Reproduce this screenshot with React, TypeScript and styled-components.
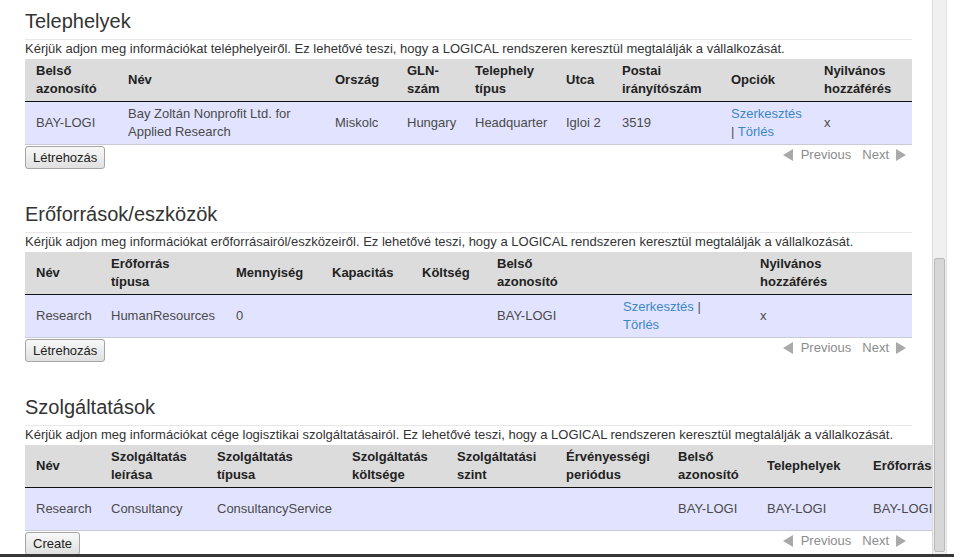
import React from 'react';
import styled, { createGlobalStyle } from 'styled-components';

const GlobalStyle = createGlobalStyle`
  html, body {
    margin: 0;
    padding: 0;
    background: #fff;
    overflow: hidden;
  }
  body {
    font-family: 'Liberation Sans', Arial, sans-serif;
    color: #333;
  }
`;

const Frame = styled.div`
  width: 954px;
  height: 557px;
  display: flex;
  flex-direction: column;
`;

const Viewport = styled.div`
  display: flex;
  flex: 1;
  min-height: 0;
`;

const Content = styled.main`
  flex: 1;
  min-width: 0;
  overflow: hidden;
  padding-left: 25px;
`;

const ScrollTrack = styled.div`
  display: flex;
  flex-direction: column;
  padding: 258px 1px 2px;
  box-sizing: border-box;
  width: 15px;
  background: #f0f0f0;
  border-left: 1px solid #dadada;
  border-right: 1px solid #e2e2e2;
`;

const ScrollThumb = styled.div`
  flex: 1;
  background: #d7d7d7;
  border: 1px solid #b9b9b9;
  border-radius: 2px;
`;

const RightGap = styled.div`
  width: 7px;
  background: #fff;
`;

const TaskBar = styled.div`
  height: 3px;
  background: #343638;
`;

const Section = styled.section`
  width: 887px;
  padding: 9px 0 24px;
`;

const Heading = styled.h2`
  margin: 0;
  font-size: 20px;
  font-weight: normal;
  line-height: 24px;
  padding-bottom: 6px;
  border-bottom: 1px solid #e8e8e8;
  color: #333;
`;

const Description = styled.p`
  margin: 0;
  font-size: 13px;
  line-height: 18px;
  padding-bottom: 1px;
  color: #333;
  white-space: nowrap;
`;

const Table = styled.table<{ $width: number }>`
  width: ${(p) => p.$width}px;
  border-collapse: collapse;
  table-layout: fixed;
`;

const HeadRow = styled.tr`
  height: 42px;
`;

const HeadCell = styled.th`
  background: #dcdcdc;
  text-align: left;
  font-weight: bold;
  font-size: 13px;
  line-height: 18px;
  padding: 3px 12px 3px 11px;
  border-bottom: 1px solid #111;
  color: #222;
  vertical-align: middle;
  white-space: normal;
`;

const BodyRow = styled.tr`
  height: 43px;
`;

const Cell = styled.td`
  background: #e2e4ff;
  padding: 3px 9px 3px 11px;
  font-size: 13px;
  line-height: 18px;
  color: #4a4a4a;
  border-bottom: 1px solid #c9cad4;
  vertical-align: middle;
  overflow: hidden;
  white-space: normal;
`;

const Link = styled.a`
  color: #3d86c6;
  text-decoration: none;
  cursor: pointer;
`;

const Sep = styled.span`
  color: #555;
`;

const Footer = styled.div`
  display: flex;
  justify-content: space-between;
  align-items: flex-start;
  margin-top: 1px;
`;

const Button = styled.button`
  height: 23px;
  padding: 0 7px;
  box-sizing: border-box;
  font-family: 'Liberation Sans', Arial, sans-serif;
  font-size: 13px;
  color: #222;
  border: 1px solid #a5a5a5;
  border-radius: 3px;
  background: linear-gradient(#f8f8f8, #e0e0e0);
`;

const Pager = styled.div`
  display: flex;
  align-items: center;
  padding-right: 6px;
  font-size: 13px;
  line-height: 18px;
  color: #8c8c8c;
`;

const PagerItem = styled.span<{ $gap: number }>`
  margin-left: ${(p) => p.$gap}px;
  display: flex;
  align-items: center;
`;

const Arrow = ({ dir }: { dir: 'left' | 'right' }) => (
  <svg width="10" height="12" viewBox="0 0 10 12">
    <polygon points={dir === 'left' ? '10,0 10,12 0,6' : '0,0 0,12 10,6'} fill="#a9a9a9" />
  </svg>
);

type CellValue = string | { actions: true };

type Column = {
  label: string[];
  width: number;
};

type SectionData = {
  title: string;
  description: string;
  columns: Column[];
  rows: CellValue[][];
  button: string;
};

const actions: CellValue = { actions: true };

const sections: SectionData[] = [
  {
    title: 'Telephelyek',
    description:
      'Kérjük adjon meg információkat teléphelyeiről. Ez lehetővé teszi, hogy a LOGICAL rendszeren keresztül megtalálják a vállalkozását.',
    columns: [
      { label: ['Belső', 'azonosító'], width: 92 },
      { label: ['Név'], width: 207 },
      { label: ['Ország'], width: 72 },
      { label: ['GLN-', 'szám'], width: 68 },
      { label: ['Telephely', 'típus'], width: 91 },
      { label: ['Utca'], width: 56 },
      { label: ['Postai', 'irányítószám'], width: 109 },
      { label: ['Opciók'], width: 93 },
      { label: ['Nyilvános', 'hozzáférés'], width: 99 },
    ],
    rows: [
      [
        'BAY-LOGI',
        'Bay Zoltán Nonprofit Ltd. for Applied Research',
        'Miskolc',
        'Hungary',
        'Headquarter',
        'Igloi 2',
        '3519',
        actions,
        'x',
      ],
    ],
    button: 'Létrehozás',
  },
  {
    title: 'Erőforrások/eszközök',
    description:
      'Kérjük adjon meg információkat erőforrásairól/eszközeiről. Ez lehetővé teszi, hogy a LOGICAL rendszeren keresztül megtalálják a vállalkozását.',
    columns: [
      { label: ['Név'], width: 75 },
      { label: ['Erőforrás', 'típusa'], width: 125 },
      { label: ['Mennyiség'], width: 96 },
      { label: ['Kapacitás'], width: 90 },
      { label: ['Költség'], width: 75 },
      { label: ['Belső', 'azonosító'], width: 126 },
      { label: [], width: 137 },
      { label: ['Nyilvános', 'hozzáférés'], width: 163 },
    ],
    rows: [['Research', 'HumanResources', '0', '', '', 'BAY-LOGI', actions, 'x']],
    button: 'Létrehozás',
  },
  {
    title: 'Szolgáltatások',
    description:
      'Kérjük adjon meg információkat cége logisztikai szolgáltatásairól. Ez lehetővé teszi, hogy a LOGICAL rendszeren keresztül megtalálják a vállalkozását.',
    columns: [
      { label: ['Név'], width: 75 },
      { label: ['Szolgáltatás', 'leírása'], width: 106 },
      { label: ['Szolgáltatás', 'típusa'], width: 135 },
      { label: ['Szolgáltatás', 'költsége'], width: 105 },
      { label: ['Szolgáltatási', 'szint'], width: 109 },
      { label: ['Érvényességi', 'periódus'], width: 112 },
      { label: ['Belső', 'azonosító'], width: 89 },
      { label: ['Telephelyek'], width: 106 },
      { label: ['Erőforrások'], width: 110 },
      { label: ['Opciók'], width: 100 },
      { label: ['Nyilvános', 'hozzáférés'], width: 100 },
    ],
    rows: [
      [
        'Research',
        'Consultancy',
        'ConsultancyService',
        '',
        '',
        '',
        'BAY-LOGI',
        'BAY-LOGI',
        'BAY-LOGI',
        actions,
        'x',
      ],
    ],
    button: 'Create',
  },
];

const renderCell = (value: CellValue) => {
  if (typeof value === 'string') return value;
  return (
    <>
      <Link>Szerkesztés</Link> <Sep>|</Sep> <Link>Törlés</Link>
    </>
  );
};

const DataSection = ({ data }: { data: SectionData }) => {
  const tableWidth = data.columns.reduce((sum, c) => sum + c.width, 0);

  return (
    <Section>
      <Heading>{data.title}</Heading>
      <Description>{data.description}</Description>
      <Table $width={tableWidth}>
        <colgroup>
          {data.columns.map((column, i) => (
            <col key={i} style={{ width: column.width }} />
          ))}
        </colgroup>
        <thead>
          <HeadRow>
            {data.columns.map((column, i) => (
              <HeadCell key={i}>
                {column.label.map((line, j) => (
                  <React.Fragment key={line}>
                    {j > 0 && <br />}
                    {line}
                  </React.Fragment>
                ))}
              </HeadCell>
            ))}
          </HeadRow>
        </thead>
        <tbody>
          {data.rows.map((row, i) => (
            <BodyRow key={i}>
              {row.map((value, j) => (
                <Cell key={j}>{renderCell(value)}</Cell>
              ))}
            </BodyRow>
          ))}
        </tbody>
      </Table>
      <Footer>
        <Button>{data.button}</Button>
        <Pager>
          <Arrow dir="left" />
          <PagerItem $gap={8}>Previous</PagerItem>
          <PagerItem $gap={11}>Next</PagerItem>
          <PagerItem $gap={7}>
            <Arrow dir="right" />
          </PagerItem>
        </Pager>
      </Footer>
    </Section>
  );
};

export default function App() {
  return (
    <>
      <GlobalStyle />
      <Frame>
        <Viewport>
          <Content>
            {sections.map((section) => (
              <DataSection key={section.title} data={section} />
            ))}
          </Content>
          <ScrollTrack>
            <ScrollThumb />
          </ScrollTrack>
          <RightGap />
        </Viewport>
        <TaskBar />
      </Frame>
    </>
  );
}
